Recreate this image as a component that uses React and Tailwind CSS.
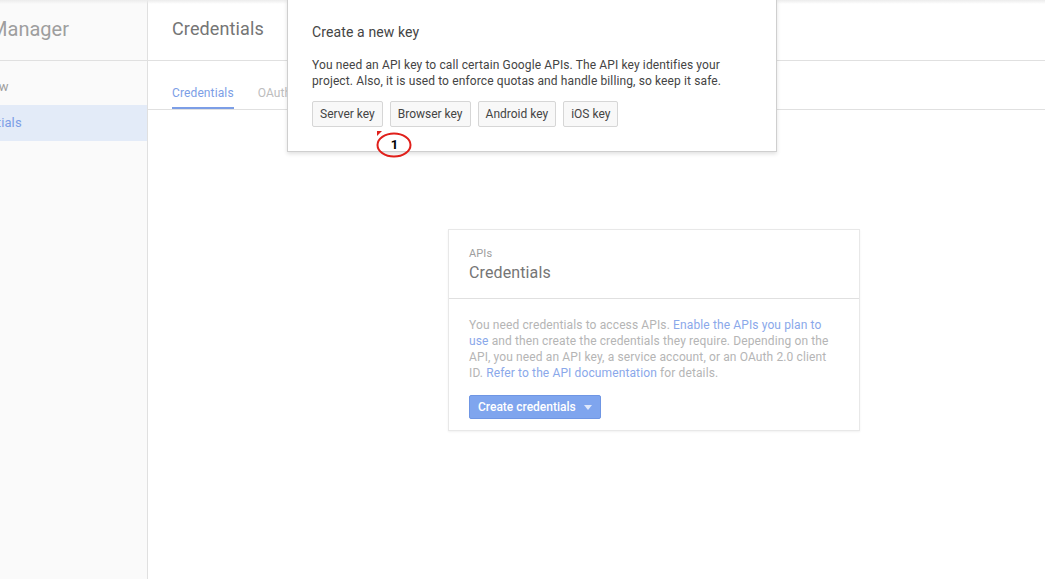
export default function App() {
  const font = { fontFamily: 'Roboto, "Liberation Sans", Arial, sans-serif' };

  return (
    <div className="relative flex h-[579px] w-[1045px] overflow-hidden bg-white tracking-[0.12px]" style={font}>
      {/* top shade */}
      <div className="pointer-events-none absolute left-0 right-0 top-0 z-10 h-[4px] bg-gradient-to-b from-[#ececec] to-transparent" />

      {/* sidebar, scrolled off to the left */}
      <aside className="w-[148px] shrink-0 overflow-hidden border-r border-[#e0e0e0] bg-[#fafafa]">
        <div className="flex h-[61px] items-center border-b border-[#e0e0e0] pb-[2px]">
          <span className="ml-[-46px] whitespace-nowrap text-[20px] tracking-normal text-[#9e9e9e]">API Manager</span>
        </div>
        <div className="pt-[14px]">
          <div className="flex h-[24px] items-center">
            <span className="ml-[-45px] whitespace-nowrap text-[13px] text-[#9e9e9e]">Overview</span>
          </div>
          <div className="mt-[6px] flex h-[36px] items-center bg-[#e3ebf8]">
            <span className="ml-[-45px] whitespace-nowrap text-[13px] text-[#7c9ee6]">Credentials</span>
          </div>
        </div>
      </aside>

      {/* main */}
      <main className="flex-1">
        <div className="flex h-[61px] items-center border-b border-[#e0e0e0] pb-[2px] pl-[24px]">
          <h1 className="text-[18px] leading-[24px] text-[#757575]">Credentials</h1>
        </div>
        <div className="flex h-[49px] items-end gap-[24px] border-b border-[#e0e0e0] pl-[24px]">
          <div className="border-b-2 border-[#7c9ee6] pb-[6px] text-[12px] leading-[16px] text-[#7c9ee6]">Credentials</div>
          <div className="pb-[8px] text-[12px] leading-[16px] text-[#bdbdbd]">OAuth consent screen</div>
        </div>

        <section className="ml-[300px] mt-[119px] w-[412px] border border-[#e8e8e8] bg-white shadow-[0_1px_2px_rgba(0,0,0,0.06)]">
          <div className="border-b border-[#e0e0e0] px-[20px] pb-[15px] pt-[17px]">
            <div className="text-[11px] leading-[14px] text-[#9e9e9e]">APIs</div>
            <div className="mt-[2px] text-[16px] leading-[20px] text-[#757575]">Credentials</div>
          </div>
          <div className="px-[20px] pb-[11px] pt-[18px]">
            <p className="text-[12px] leading-[16px] text-[#b5b5b5]">
              You need credentials to access APIs.{' '}
              <a className="text-[#8aa8ea]">Enable the APIs you plan to use</a> and then create the
              credentials they require. Depending on the API, you need an API key, a service account,
              or an OAuth 2.0 client ID.{' '}
              <a className="text-[#8aa8ea]">Refer to the API documentation</a> for details.
            </p>
            <button className="mt-[14px] flex h-[24px] items-center gap-[8px] rounded-[2px] border border-[#6f96e4] bg-[#7fa5ee] pl-[8px] pr-[8px] text-[12px] font-medium tracking-normal text-white">
              Create credentials
              <svg width="8" height="5" viewBox="0 0 8 5">
                <path d="M0 0h8L4 5z" fill="#dfe8fb" />
              </svg>
            </button>
          </div>
        </section>
      </main>

      {/* popup */}
      <div className="absolute left-[287px] top-[-1px] z-20 w-[490px] border border-[#cfcfcf] bg-white px-[24px] pb-[24px] pt-[23px] shadow-[0_2px_4px_rgba(0,0,0,0.12)]">
        <div className="text-[14px] leading-[18px] text-[#444]">Create a new key</div>
        <p className="mt-[16px] text-[12px] leading-[16px] text-[#444]">
          You need an API key to call certain Google APIs. The API key identifies your project. Also, it
          is used to enforce quotas and handle billing, so keep it safe.
        </p>
        <div className="mt-[12px] flex gap-[7px]">
          {['Server key', 'Browser key', 'Android key', 'iOS key'].map((k) => (
            <button
              key={k}
              className="h-[26px] rounded-[2px] border border-[#d6d6d6] bg-[#f8f8f8] px-[7px] text-[12px] tracking-normal text-[#444]"
            >
              {k}
            </button>
          ))}
        </div>
      </div>

      {/* annotation marker */}
      <div className="absolute left-[376px] top-[130px] z-30 h-[28px] w-[37px]">
        <svg width="37" height="28" viewBox="0 0 37 28" className="absolute left-0 top-0">
          <path d="M1 1h5L1 6z" fill="#e0201b" />
          <ellipse cx="18" cy="15" rx="16.5" ry="11.5" fill="none" stroke="#e0201b" strokeWidth="2" />
        </svg>
        <span className="absolute left-0 right-0 top-[7px] text-center text-[13px] font-bold leading-[16px] text-black">1</span>
      </div>
    </div>
  );
}
